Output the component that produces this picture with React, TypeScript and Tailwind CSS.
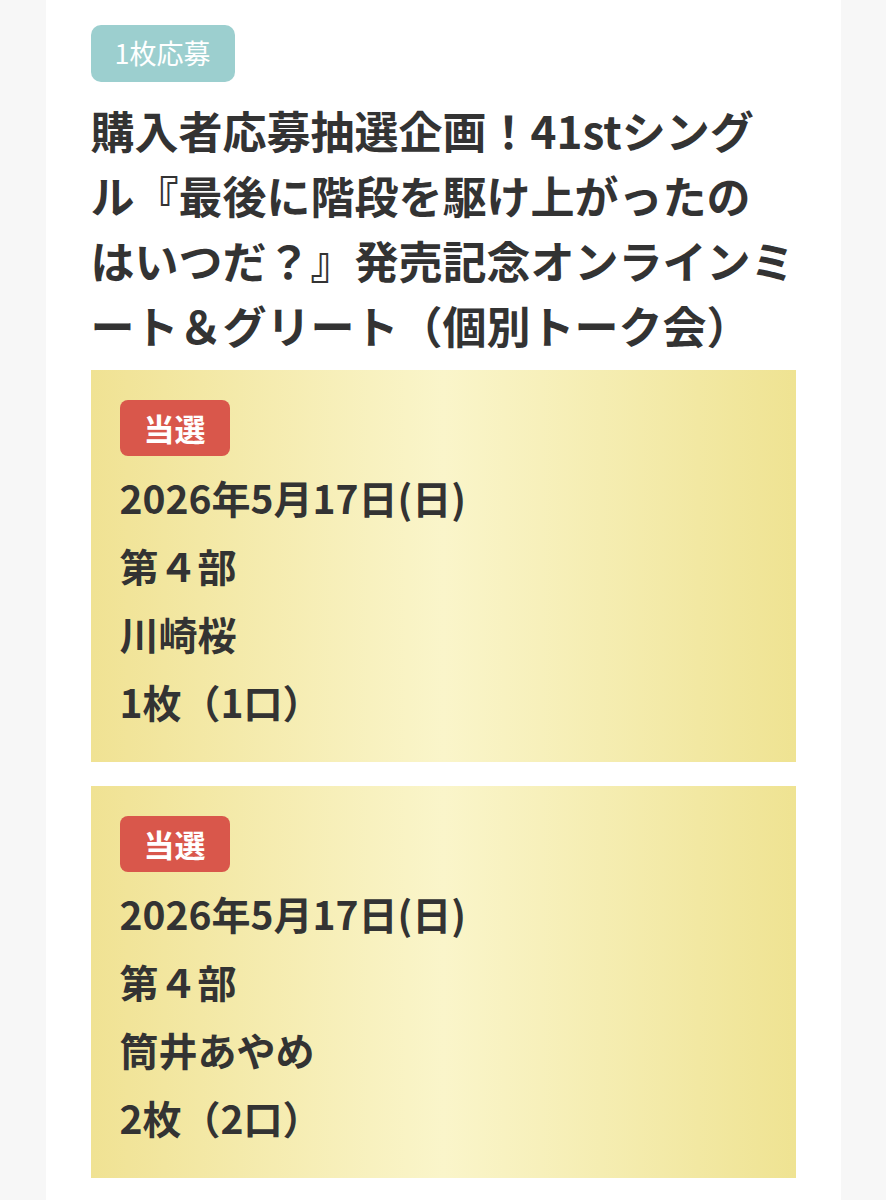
import React from 'react';

type Entry = {
  date: string;
  part: string;
  member: string;
  count: string;
};

const entries: Entry[] = [
  { date: '2026年5月17日(日)', part: '第４部', member: '川崎桜', count: '1枚（1口）' },
  { date: '2026年5月17日(日)', part: '第４部', member: '筒井あやめ', count: '2枚（2口）' },
];

const titleLines = [
  '購入者応募抽選企画！41stシング',
  'ル『最後に階段を駆け上がったの',
  'はいつだ？』発売記念オンラインミ',
  'ート＆グリート（個別トーク会）',
];

function ResultCard({ entry }: { entry: Entry }) {
  return (
    <div className="bg-gradient-to-r from-[#f0e293] via-[#faf5ca] to-[#efe392] pl-[29px] pr-6 pt-[30px] pb-[27px]">
      <div className="inline-flex h-[56px] items-center rounded-[8px] bg-[#d9574b] px-[24px] text-[31px] font-bold text-white">
        当選
      </div>
      <div className="mt-[7px] text-[39px] font-bold leading-[68px] text-[#333333]">
        <p>{entry.date}</p>
        <p>{entry.part}</p>
        <p>{entry.member}</p>
        <p>{entry.count}</p>
      </div>
    </div>
  );
}

export default function App() {
  return (
    <div className="min-h-screen bg-[#f7f7f7] flex justify-center font-['Noto_Sans_CJK_JP','Noto_Sans',sans-serif]">
      <div className="w-[795px] bg-white px-[45px] pt-[25px] pb-6">
        {/* Entry type */}
        <div className="inline-flex h-[57px] items-center rounded-[10px] bg-[#9ccfcf] px-[24px] text-[27px] text-white">
          1枚応募
        </div>

        {/* Title */}
        <h1 className="mt-[16px] text-[44px] font-bold leading-[65px] text-[#333333]">
          {titleLines.map((line) => (
            <span key={line} className="block whitespace-nowrap">
              {line}
            </span>
          ))}
        </h1>

        {/* Results */}
        <div className="mt-[12px] flex flex-col gap-6">
          {entries.map((entry) => (
            <ResultCard key={entry.member} entry={entry} />
          ))}
        </div>
      </div>
    </div>
  );
}
